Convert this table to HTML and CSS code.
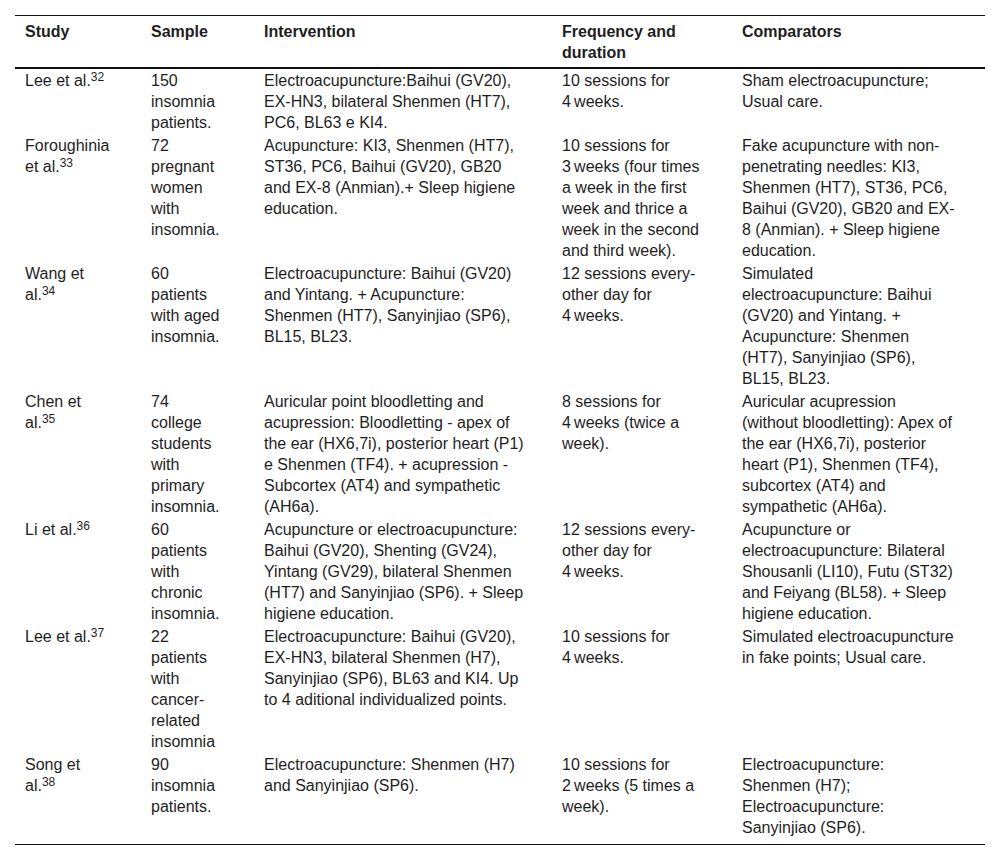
FILE: index.html
```html
<!DOCTYPE html>
<html lang="en">
<head>
<meta charset="utf-8">
<title>Acupuncture studies</title>
<link rel="stylesheet" href="styles.css">
</head>
<body>
<table class="studies">
  <colgroup>
    <col class="c-study">
    <col class="c-sample">
    <col class="c-int">
    <col class="c-freq">
    <col class="c-comp">
  </colgroup>
  <thead>
    <tr>
      <th>Study</th>
      <th>Sample</th>
      <th>Intervention</th>
      <th>Frequency and duration</th>
      <th>Comparators</th>
    </tr>
  </thead>
  <tbody>
    <tr>
      <td>Lee et al.<sup>32</sup></td>
      <td>150 insomnia patients.</td>
      <td>Electroacupuncture:Baihui (GV20), EX-HN3, bilateral Shenmen (HT7), PC6, BL63 e KI4.</td>
      <td>10 sessions for 4&#8239;weeks.</td>
      <td>Sham electroacupuncture; Usual care.</td>
    </tr>
    <tr>
      <td>Foroughinia et al.<sup>33</sup></td>
      <td>72 pregnant women with insomnia.</td>
      <td>Acupuncture: KI3, Shenmen (HT7), ST36, PC6, Baihui (GV20), GB20 and EX-8 (Anmian).+ Sleep higiene education.</td>
      <td>10 sessions for 3&#8239;weeks (four times a week in the first week and thrice a week in the second and third week).</td>
      <td>Fake acupuncture with non-penetrating needles: KI3, Shenmen (HT7), ST36, PC6, Baihui (GV20), GB20 and EX-<wbr>8 (Anmian). + Sleep higiene education.</td>
    </tr>
    <tr>
      <td>Wang et al.<sup>34</sup></td>
      <td>60 patients with aged insomnia.</td>
      <td>Electroacupuncture: Baihui (GV20) and Yintang. + Acupuncture: Shenmen (HT7), Sanyinjiao (SP6), BL15, BL23.</td>
      <td>12 sessions every-other day for 4&#8239;weeks.</td>
      <td>Simulated electroacupuncture: Baihui (GV20) and Yintang. + Acupuncture: Shenmen (HT7), Sanyinjiao (SP6), BL15, BL23.</td>
    </tr>
    <tr>
      <td>Chen et al.<sup>35</sup></td>
      <td>74 college students with primary insomnia.</td>
      <td>Auricular point bloodletting and acupression: Bloodletting - apex of the ear (HX6,7i), posterior heart (P1) e Shenmen (TF4). + acupression - Subcortex (AT4) and sympathetic (AH6a).</td>
      <td>8 sessions for 4&#8239;weeks (twice a week).</td>
      <td>Auricular acupression (without bloodletting): Apex of the ear (HX6,7i), posterior heart (P1), Shenmen (TF4), subcortex (AT4) and sympathetic (AH6a).</td>
    </tr>
    <tr>
      <td>Li et al.<sup>36</sup></td>
      <td>60 patients with chronic insomnia.</td>
      <td>Acupuncture or electroacupuncture: Baihui (GV20), Shenting (GV24), Yintang (GV29), bilateral Shenmen (HT7) and Sanyinjiao (SP6). + Sleep higiene education.</td>
      <td>12 sessions every-other day for 4&#8239;weeks.</td>
      <td>Acupuncture or electroacupuncture: Bilateral Shousanli (LI10), Futu (ST32) and Feiyang (BL58). + Sleep higiene education.</td>
    </tr>
    <tr>
      <td>Lee et al.<sup>37</sup></td>
      <td>22 patients with cancer-related insomnia</td>
      <td>Electroacupuncture: Baihui (GV20), EX-HN3, bilateral Shenmen (H7), Sanyinjiao (SP6), BL63 and KI4. Up to 4 aditional individualized points.</td>
      <td>10 sessions for 4&#8239;weeks.</td>
      <td>Simulated electroacupuncture in fake points; Usual care.</td>
    </tr>
    <tr class="last">
      <td>Song et al.<sup>38</sup></td>
      <td>90 insomnia patients.</td>
      <td>Electroacupuncture: Shenmen (H7) and Sanyinjiao (SP6).</td>
      <td>10 sessions for 2&#8239;weeks (5 times a week).</td>
      <td>Electroacupuncture: Shenmen (H7); Electroacupuncture: Sanyinjiao (SP6).</td>
    </tr>
  </tbody>
</table>
</body>
</html>
```

FILE: styles.css
```css
html, body {
  margin: 0;
  padding: 0;
  background: #ffffff;
}

body {
  padding: 15px;
  font-family: "Liberation Sans", Arial, sans-serif;
  font-size: 16px;
  line-height: 21px;
  color: #1e1e1e;
}

.studies {
  width: 970px;
  border-collapse: collapse;
  table-layout: fixed;
  border-top: 1px solid #111111;
  border-bottom: 1px solid #111111;
}

.c-study { width: 126px; }
.c-sample { width: 113px; }
.c-int { width: 298px; }
.c-freq { width: 180px; }
.c-comp { width: 253px; }

.studies th,
.studies td {
  text-align: left;
  vertical-align: top;
  padding-left: 10px;
}

.studies th {
  font-weight: bold;
  padding-top: 5px;
  padding-bottom: 4px;
  border-bottom: 2px solid #111111;
}

.studies td {
  padding-top: 1px;
  padding-bottom: 1px;
}

.studies tr.last td {
  padding-bottom: 6px;
}

.studies th:nth-child(1), .studies td:nth-child(1) { padding-right: 29px; }
.studies th:nth-child(2), .studies td:nth-child(2) { padding-right: 32px; }
.studies th:nth-child(3), .studies td:nth-child(3) { padding-right: 22px; }
.studies th:nth-child(4), .studies td:nth-child(4) { padding-right: 24px; }
.studies th:nth-child(5), .studies td:nth-child(5) { padding-right: 29.2px; }

.studies sup {
  font-size: 12px;
  line-height: 0;
  vertical-align: 5px;
}
```
